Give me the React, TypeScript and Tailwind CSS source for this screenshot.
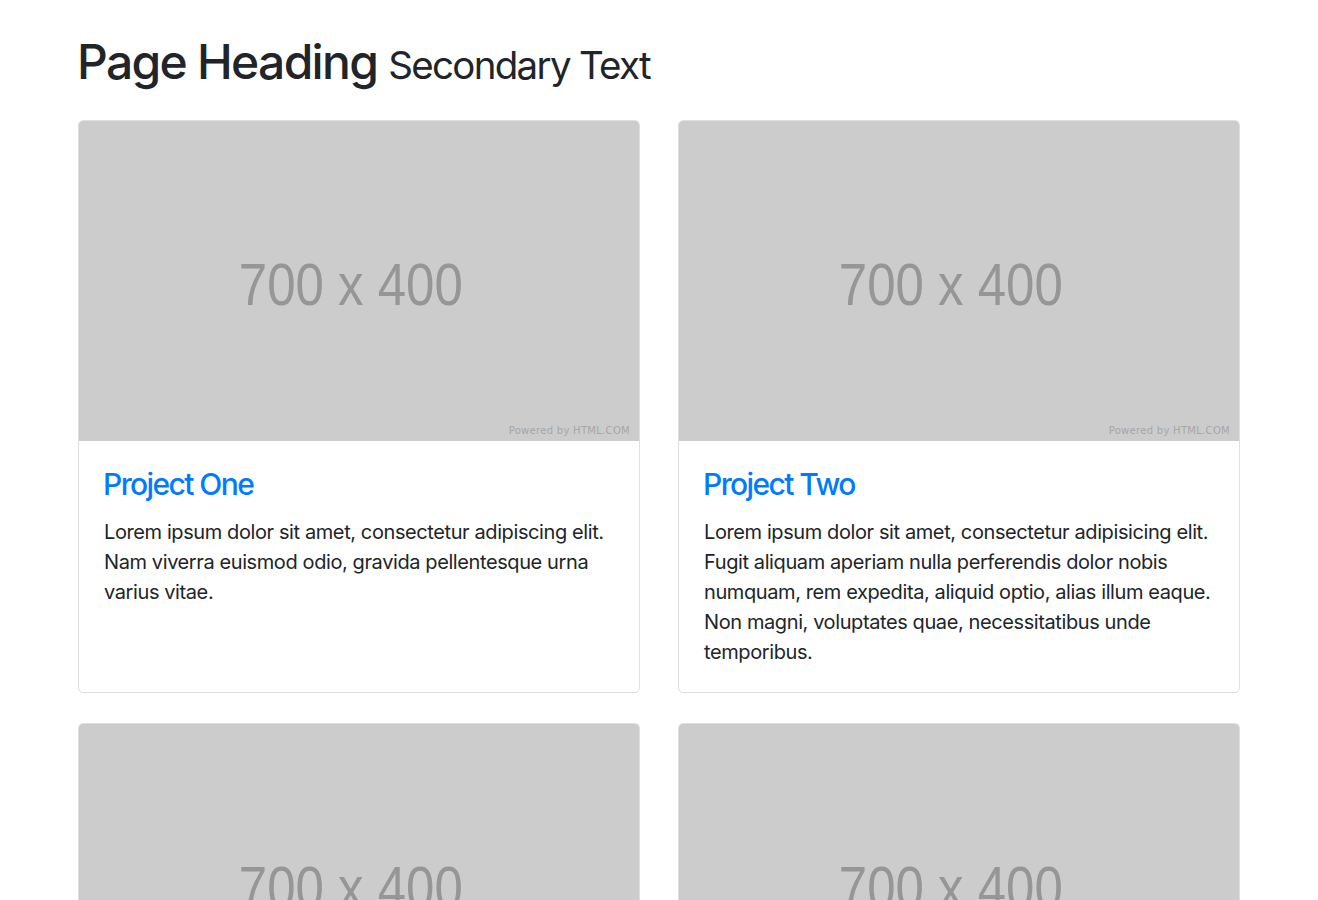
import React from "react";

const projects = [
    {
        title: "Project One",
        text: "Lorem ipsum dolor sit amet, consectetur adipiscing elit. Nam viverra euismod odio, gravida pellentesque urna varius vitae.",
    },
    {
        title: "Project Two",
        text: "Lorem ipsum dolor sit amet, consectetur adipisicing elit. Fugit aliquam aperiam nulla perferendis dolor nobis numquam, rem expedita, aliquid optio, alias illum eaque. Non magni, voluptates quae, necessitatibus unde temporibus.",
    },
    {
        title: "Project Three",
        text: "Lorem ipsum dolor sit amet, consectetur adipisicing elit. Quos quisquam, error quod sed cumque, odio distinctio velit nostrum temporibus necessitatibus et facere atque iure perspiciatis mollitia recusandae vero vel quam!",
    },
    {
        title: "Project Four",
        text: "Lorem ipsum dolor sit amet, consectetur adipisicing elit. Nam viverra euismod odio, gravida pellentesque urna varius vitae.",
    },
];

function Placeholder() {
    return (
        <div className="relative h-[320px] bg-[#cccccc] rounded-t-[4px] flex items-center justify-center">
            <span className="text-[60px] leading-none text-[#969696] scale-x-[0.85] -translate-x-[8px] translate-y-[4px] font-['Liberation_Sans',sans-serif]">
                700 x 400
            </span>
            {/* watermark */}
            <span className="absolute right-[9px] bottom-[3px] text-[10px] tracking-[0.3px] text-[#a6a6a6] font-['DejaVu_Sans',sans-serif]">
                Powered by HTML.COM
            </span>
        </div>
    );
}

export default function App() {
    return (
        <div className="min-h-screen bg-white font-['Inter',sans-serif] text-[#212529]">
            <div className="w-[1162px] mx-auto pt-[30px]">
                <h1 className="h-[60px] flex items-baseline pt-[8px] text-[48px] leading-[48px] font-medium tracking-[-1.7px] mb-[30px] -ml-[1px]">
                    Page Heading
                    <small className="ml-[11px] text-[38.5px] leading-none font-normal tracking-[-1.7px]">Secondary Text</small>
                </h1>

                <div className="grid grid-cols-2 gap-x-[38px] gap-y-[30px]">
                    {projects.map((p) => (
                        <div key={p.title} className="flex flex-col border border-[#dfdfdf] rounded-[5px] bg-white">
                            <Placeholder />
                            <div className="px-[25px] pt-[25px] pb-[25px]">
                                <h4 className="text-[30px] leading-[36px] font-medium tracking-[-1.6px] text-[#007bff] mb-[15px] -ml-[1px]">
                                    {p.title}
                                </h4>
                                <p className="text-[20px] leading-[30px] tracking-[-0.4px]">{p.text}</p>
                            </div>
                        </div>
                    ))}
                </div>
            </div>
        </div>
    );
}
